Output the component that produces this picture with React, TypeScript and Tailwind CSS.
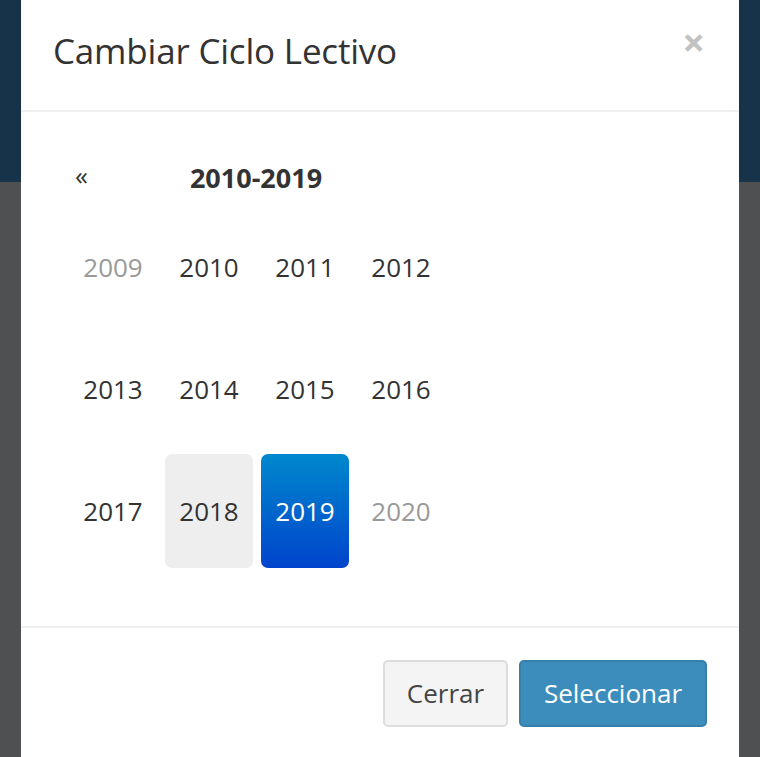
const years = [
  { y: "2009", muted: true },
  { y: "2010" },
  { y: "2011" },
  { y: "2012" },
  { y: "2013" },
  { y: "2014" },
  { y: "2015" },
  { y: "2016" },
  { y: "2017" },
  { y: "2018", focused: true },
  { y: "2019", active: true },
  { y: "2020", muted: true },
];

export default function App() {
  return (
    <div className="relative w-[760px] h-[757px] overflow-hidden bg-[#4f5052] font-['Open_Sans',sans-serif]">
      <div className="h-[182px] bg-[#17334a]" />

      <div className="absolute left-[21px] top-0 w-[718px] h-[800px] bg-white flex flex-col">
        <div className="h-[112px] flex items-center justify-between pl-[32px] pr-[34px] border-b-2 border-[#efefef] shrink-0">
          <h4 className="text-[35px] text-[#333] leading-none tracking-[-0.2px] mb-[10px]">Cambiar Ciclo Lectivo</h4>
          <span className="text-[40px] font-bold text-[#c2c2c2] leading-none mb-[26px]">×</span>
        </div>

        <div className="h-[516px] shrink-0 pl-[48px] pt-[36px] border-b-2 border-[#efefef]">
          <div className="flex items-center h-[60px] w-[384px]">
            <span className="w-[48px] pl-[6px] text-[26px] text-[#333] leading-none mb-[6px]">«</span>
            <span className="flex-1 text-center text-[27px] font-bold text-[#333] pr-[58px]">2010-2019</span>
          </div>
          <div className="grid grid-cols-[repeat(4,88px)] gap-x-[8px] gap-y-[8px] pt-[2px]">
            {years.map((c) => (
              <div
                key={c.y}
                className={
                  "h-[114px] rounded-[7px] flex items-center justify-center text-[26px] " +
                  (c.active
                    ? "bg-[linear-gradient(to_bottom,#0088cc,#0044cc)] text-white"
                    : c.focused
                    ? "bg-[#eeeeee] text-[#333]"
                    : c.muted
                    ? "text-[#999]"
                    : "text-[#333]")
                }
              >
                {c.y}
              </div>
            ))}
          </div>
        </div>

        <div className="flex justify-end gap-[11px] pt-[32px] pr-[32px]">
          <button className="h-[67px] w-[125px] rounded-[5px] bg-[#f4f4f4] border-2 border-[#dddddd] text-[26px] text-[#444]">
            Cerrar
          </button>
          <button className="h-[67px] w-[188px] rounded-[5px] bg-[#3c8dbc] border-2 border-[#367fa9] text-[26px] text-white">
            Seleccionar
          </button>
        </div>
      </div>
    </div>
  );
}
